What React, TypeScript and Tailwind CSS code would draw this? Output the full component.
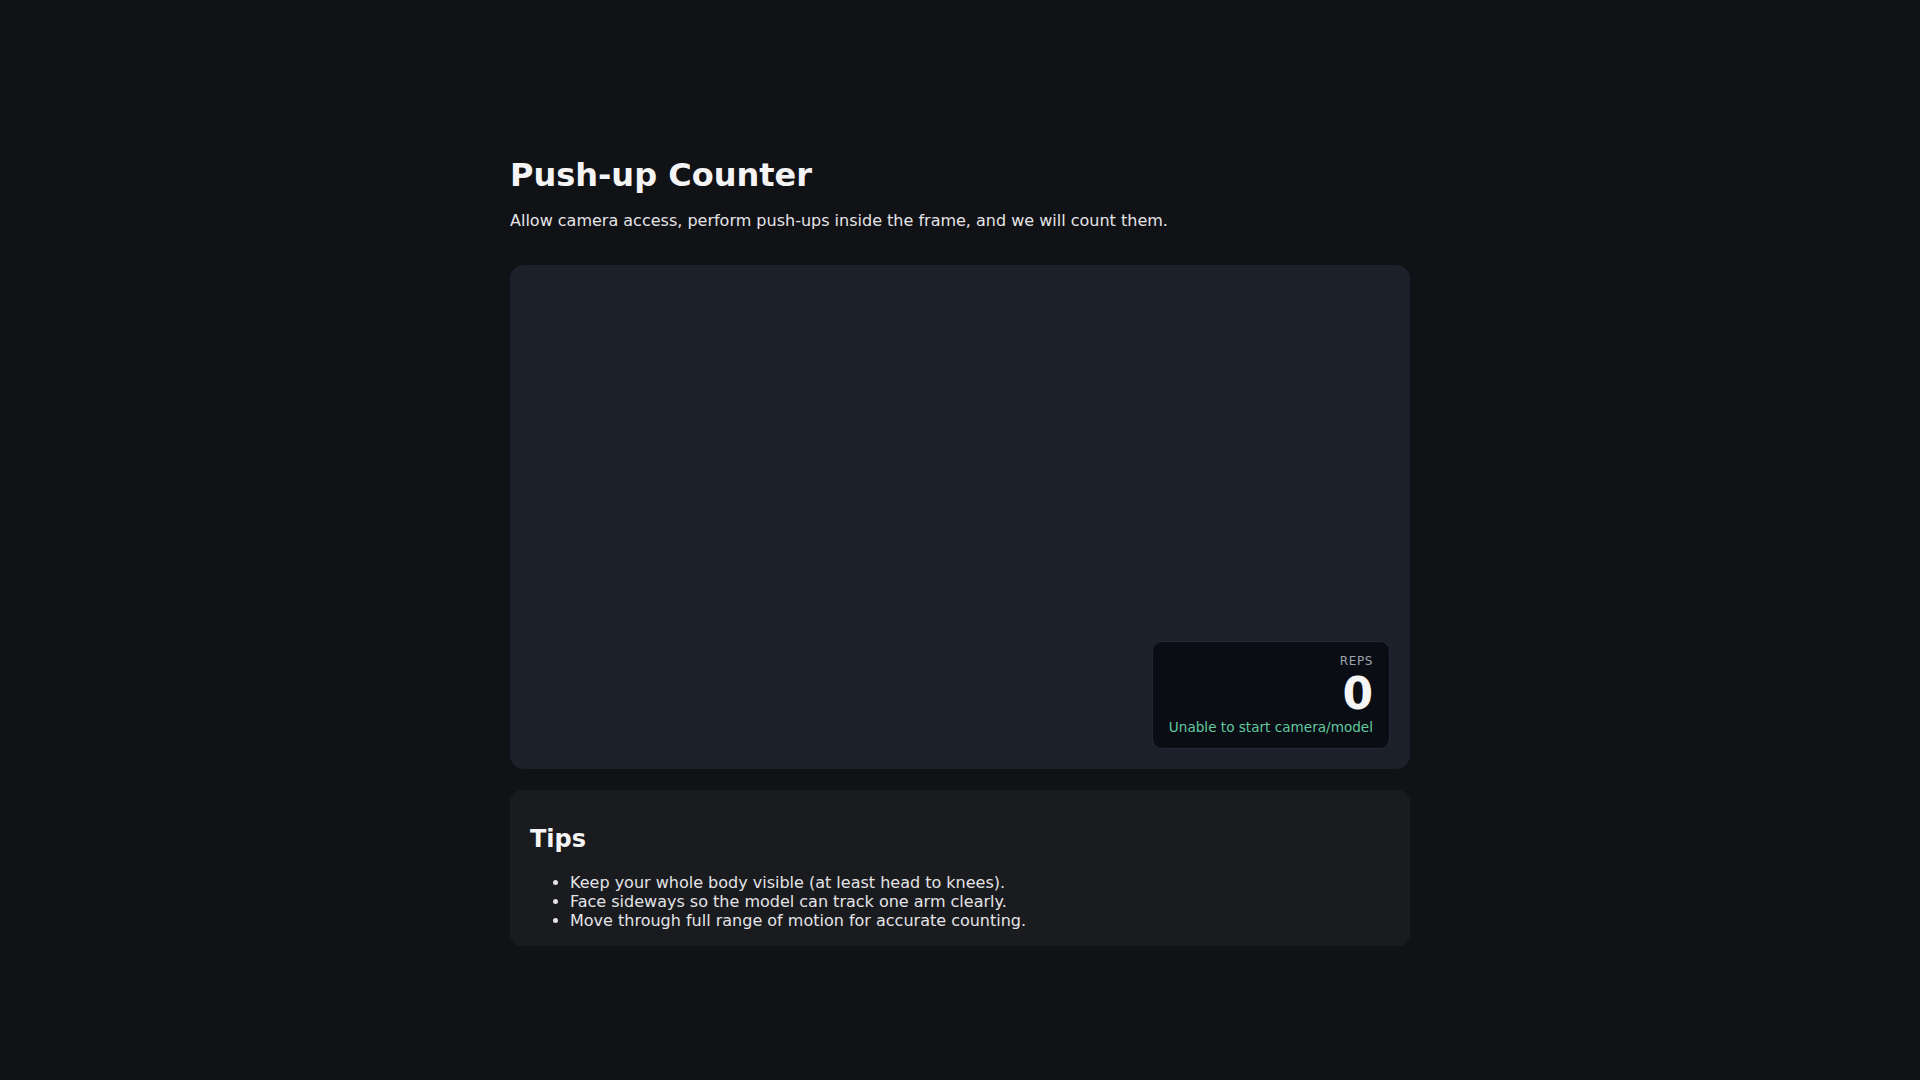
import React from 'react';

const tips = [
  'Keep your whole body visible (at least head to knees).',
  'Face sideways so the model can track one arm clearly.',
  'Move through full range of motion for accurate counting.',
];

const RepCounter = ({ reps, status }: { reps: number; status: string }) => (
  <div className="absolute right-5 bottom-5 rounded-[10px] border border-[#232834] bg-[#0a0d13] px-4 pt-3 pb-[13px] text-right">
    <div className="text-[12px] leading-[normal] tracking-wider text-[#9ca3af]">REPS</div>
    <div className="text-[44px] font-bold leading-[normal] text-[#f5f5f5]">{reps}</div>
    <div className="text-[13.6px] leading-[normal] text-[#62c9a0]">{status}</div>
  </div>
);

export default function App() {
  return (
    <div className="min-h-screen bg-[#111216] font-['DejaVu_Sans',sans-serif] text-[#e8e8ea]">
      <div className="mx-auto w-[900px] pt-[156px] pb-20">
        <h1 className="text-[32px] font-bold leading-[normal] text-[#f4f4f5]">Push-up Counter</h1>
        <p className="mt-[17px] text-base leading-[normal] text-[#e4e4e7]">
          Allow camera access, perform push-ups inside the frame, and we will count them.
        </p>

        {/* camera viewport */}
        <div className="relative mt-[35px] h-[504px] rounded-[14px] bg-[#1c202a]">
          <RepCounter reps={0} status="Unable to start camera/model" />
        </div>

        <div className="mt-[21px] rounded-xl bg-[#1a1b1f] px-5 pt-4 pb-4">
          <h2 className="mt-[19px] mb-5 text-2xl font-bold leading-[normal] text-[#f4f4f5]">Tips</h2>
          <ul className="list-disc pl-10 text-base leading-[normal] text-[#e4e4e7]">
            {tips.map((t) => (
              <li key={t}>{t}</li>
            ))}
          </ul>
        </div>
      </div>
    </div>
  );
}
